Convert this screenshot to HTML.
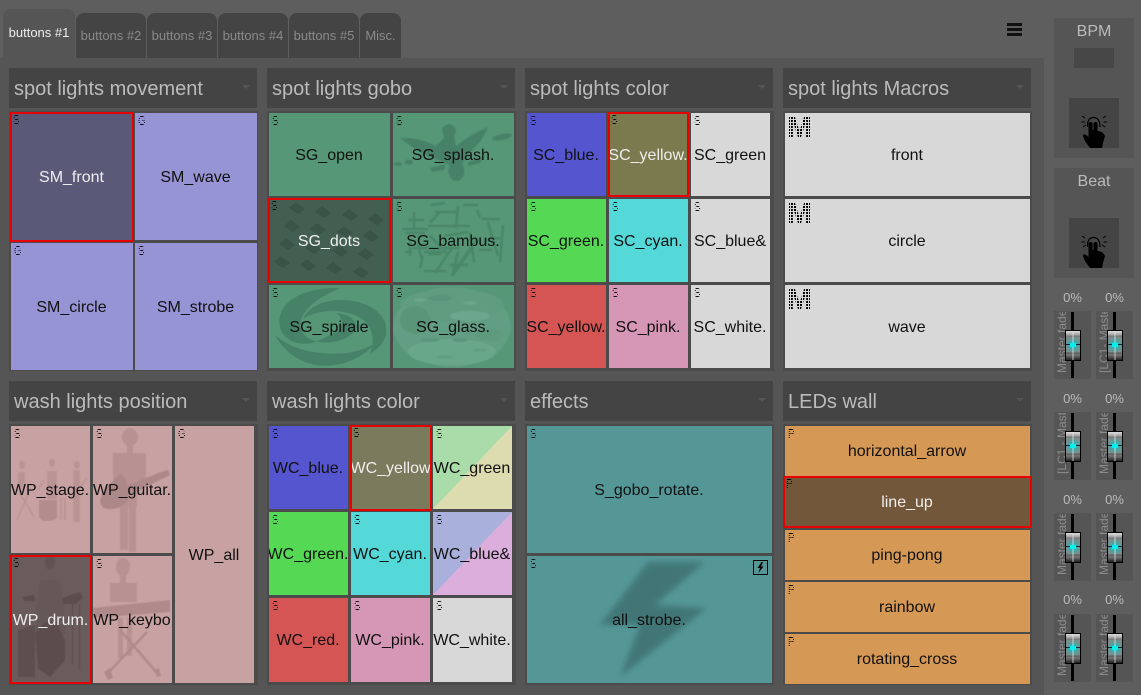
<!DOCTYPE html>
<html><head><meta charset="utf-8">
<style>
html,body{margin:0;padding:0;width:1141px;height:695px;overflow:hidden;background:#5e5e5e;font-family:"Liberation Sans",sans-serif}
div,span{box-sizing:border-box}
.a{position:absolute}
.tab{position:absolute;top:13px;height:45px;background:#444;border-radius:8px 8px 0 0;color:#8a8a8a;font-size:13px;line-height:45px;text-align:center;white-space:nowrap}
.hd{position:absolute;height:40px;background:#444;color:#bbb;font-size:20px;line-height:42px;padding-left:5px;white-space:nowrap}
.hd i{position:absolute;right:7px;top:17px;border:4px solid transparent;border-top:4px solid #555;border-bottom:0}
.gr{position:absolute;background:#4b4b4b}
.b{position:absolute;overflow:hidden;display:flex;align-items:center;justify-content:center;font-size:16px;color:#111;white-space:nowrap}
.b span{position:relative;z-index:3;top:1px;left:-.5px}
.b.s{border:2px solid #e80000;color:#eee}
.b em{position:absolute;left:3px;top:1px;z-index:3;font:normal 13px/13px "Liberation Sans",sans-serif;transform:scaleX(.75);transform-origin:0 0;color:transparent;background:linear-gradient(#000 50%,transparent 50%) 0 0/1px 2px;-webkit-background-clip:text;background-clip:text}
.b.s em{left:1px;top:-1px}
.b b.m{position:absolute;left:2px;top:0;z-index:3;font:bold 30px/30px "Liberation Sans",sans-serif;color:transparent;background:conic-gradient(from 90deg at 1px 1px,#000 25%,transparent 0) 0 0/3px 3px;-webkit-background-clip:text;background-clip:text}
.pc{position:absolute;width:37px;text-align:center;font-size:13px;line-height:14px;color:#bbb}
.f{position:absolute;width:37px;height:68px;background:#555;overflow:hidden}
.f .t{position:absolute;left:0;top:1px;width:16px;height:66px;padding-top:5px;overflow:hidden;color:#8c8c8c;font-size:12px;line-height:16px;writing-mode:vertical-rl;transform:rotate(180deg);white-space:nowrap;text-align:left}
.f .k{position:absolute;left:17px;top:1px;width:3px;height:66px;background:#000}
.f .h{position:absolute;left:11px;top:19px;width:16px;height:31px;border:1px solid #000;background:linear-gradient(#ddd 0,#aaa 12%,#777 18%,#7b8d8b 22%,#7b8d8b 72%,#5a5a5a 76%,#777 82%,#222 100%)}
.f .h i{position:absolute;display:block}
.f .h .u{left:0;top:3px;width:14px;height:22px;background:radial-gradient(circle at 50% 50%,#00e0e0 0,rgba(0,200,200,.5) 28%,rgba(0,180,180,0) 60%)}
.f .h .v{left:6px;top:0;width:2px;height:29px;background:rgba(220,230,230,.4)}
.f .h .l{left:0;top:13px;width:14px;height:1px;background:#123}
.f .h .c{left:4px;top:12px;width:6px;height:4px;background:#00f0f0}
</style></head>
<body>
<div class="a" style="left:0;top:58px;width:1044px;height:637px;background:#555"></div>

<div class="a" style="left:3px;top:9px;width:72px;height:50px;background:#555;border-radius:8px 8px 0 0;color:#eee;font-size:13px;line-height:47px;text-align:center;white-space:nowrap">buttons #1</div>
<div class="tab" style="left:76px;width:70px">buttons #2</div>
<div class="tab" style="left:147px;width:70px">buttons #3</div>
<div class="tab" style="left:218px;width:70px">buttons #4</div>
<div class="tab" style="left:289px;width:70px">buttons #5</div>
<div class="tab" style="left:360px;width:41px">Misc.</div>
<div class="a" style="left:1007px;top:23px;width:15px;height:3px;background:#111"></div>
<div class="a" style="left:1007px;top:28px;width:15px;height:3px;background:#111"></div>
<div class="a" style="left:1007px;top:33px;width:15px;height:3px;background:#111"></div>

<div class="hd" style="left:9px;top:68px;width:248px">spot lights movement<i></i></div>
<div class="hd" style="left:267px;top:68px;width:248px">spot lights gobo<i></i></div>
<div class="hd" style="left:525px;top:68px;width:248px">spot lights color<i></i></div>
<div class="hd" style="left:783px;top:68px;width:248px">spot lights Macros<i></i></div>
<div class="hd" style="left:9px;top:381px;width:248px">wash lights position<i></i></div>
<div class="hd" style="left:267px;top:381px;width:248px">wash lights color<i></i></div>
<div class="hd" style="left:525px;top:381px;width:248px">effects<i></i></div>
<div class="hd" style="left:783px;top:381px;width:248px">LEDs wall<i></i></div>

<div class="gr" style="left:9px;top:111px;width:249px;height:260px"></div>
<div class="gr" style="left:267px;top:111px;width:249px;height:260px"></div>
<div class="gr" style="left:525px;top:111px;width:249px;height:260px"></div>
<div class="gr" style="left:783px;top:111px;width:249px;height:260px"></div>
<div class="gr" style="left:9px;top:424px;width:249px;height:261px"></div>
<div class="gr" style="left:267px;top:424px;width:249px;height:261px"></div>
<div class="gr" style="left:525px;top:424px;width:249px;height:261px"></div>
<div class="gr" style="left:783px;top:424px;width:249px;height:261px"></div>

<!-- spot movement -->
<div class="b s" style="left:10px;top:112px;width:124px;height:130px;background:#5a5a78"><em>S</em><span>SM_front</span></div>
<div class="b" style="left:135px;top:113px;width:122px;height:127px;background:#9694d4"><em>G</em><span>SM_wave</span></div>
<div class="b" style="left:11px;top:243px;width:122px;height:127px;background:#9694d4"><em>G</em><span>SM_circle</span></div>
<div class="b" style="left:135px;top:243px;width:122px;height:127px;background:#9694d4"><em>S</em><span>SM_strobe</span></div>
<!-- gobo -->
<div class="b" style="left:269px;top:113px;width:121px;height:83px;background:#559777"><em>S</em><span>SG_open</span></div>
<div class="b" style="left:393px;top:113px;width:121px;height:83px;background:#559777"><em>S</em><span>SG_splash.</span></div>
<div class="b s" style="left:268px;top:198px;width:123px;height:85px;background:#435f52"><em>S</em><span>SG_dots</span></div>
<div class="b" style="left:393px;top:199px;width:121px;height:83px;background:#559777"><em>S</em><span>SG_bambus.</span></div>
<div class="b" style="left:269px;top:285px;width:121px;height:83px;background:#559777"><em>S</em><span>SG_spirale</span></div>
<div class="b" style="left:393px;top:285px;width:121px;height:83px;background:#559777"><em>S</em><span>SG_glass.</span></div>
<!-- spot color -->
<div class="b" style="left:527px;top:113px;width:79px;height:83px;background:#5555d0"><em>S</em><span>SC_blue.</span></div>
<div class="b s" style="left:608px;top:112px;width:81px;height:85px;background:#7a7a4e"><em>S</em><span>SC_yellow.</span></div>
<div class="b" style="left:691px;top:113px;width:79px;height:83px;background:#d8d8d8"><em>S</em><span>SC_green</span></div>
<div class="b" style="left:527px;top:199px;width:79px;height:83px;background:#55d955"><em>S</em><span>SC_green.</span></div>
<div class="b" style="left:609px;top:199px;width:79px;height:83px;background:#55d8d8"><em>S</em><span>SC_cyan.</span></div>
<div class="b" style="left:691px;top:199px;width:79px;height:83px;background:#d8d8d8"><em>S</em><span>SC_blue&amp;</span></div>
<div class="b" style="left:527px;top:285px;width:79px;height:83px;background:#d55555"><em>S</em><span>SC_yellow.</span></div>
<div class="b" style="left:609px;top:285px;width:79px;height:83px;background:#d697b6"><em>S</em><span>SC_pink.</span></div>
<div class="b" style="left:691px;top:285px;width:79px;height:83px;background:#d8d8d8"><em>S</em><span>SC_white.</span></div>
<!-- macros -->
<div class="b" style="left:785px;top:113px;width:245px;height:83px;background:#d8d8d8"><b class="m">M</b><span>front</span></div>
<div class="b" style="left:785px;top:199px;width:245px;height:83px;background:#d8d8d8"><b class="m">M</b><span>circle</span></div>
<div class="b" style="left:785px;top:285px;width:245px;height:83px;background:#d8d8d8"><b class="m">M</b><span>wave</span></div>
<!-- wash position -->
<div class="b" style="left:11px;top:426px;width:79px;height:127px;background:#c8a2a2"><em>S</em><span>WP_stage.</span></div>
<div class="b" style="left:93px;top:426px;width:79px;height:127px;background:#c8a2a2"><em>S</em><span>WP_guitar.</span></div>
<div class="b" style="left:175px;top:426px;width:79px;height:257px;background:#c8a2a2"><em>G</em><span>WP_all</span></div>
<div class="b s" style="left:10px;top:555px;width:82px;height:129px;background:#6b5c5c"><em>S</em><span>WP_drum.</span></div>
<div class="b" style="left:93px;top:556px;width:79px;height:127px;background:#c8a2a2"><em>S</em><span>WP_keybo</span></div>
<!-- wash color -->
<div class="b" style="left:269px;top:426px;width:79px;height:83px;background:#5555d0"><em>S</em><span>WC_blue.</span></div>
<div class="b s" style="left:350px;top:425px;width:82px;height:86px;background:#7a7a5c"><em>S</em><span>WC_yellow</span></div>
<div class="b" style="left:433px;top:426px;width:79px;height:83px;background:linear-gradient(to bottom right,#a9dca9 50%,#dcdcb0 50%)"><em>S</em><span>WC_green</span></div>
<div class="b" style="left:269px;top:512px;width:79px;height:83px;background:#55d955"><em>S</em><span>WC_green.</span></div>
<div class="b" style="left:351px;top:512px;width:79px;height:83px;background:#55d8d8"><em>S</em><span>WC_cyan.</span></div>
<div class="b" style="left:433px;top:512px;width:79px;height:83px;background:linear-gradient(to bottom right,#a9b0dc 50%,#dcaedc 50%)"><em>S</em><span>WC_blue&amp;</span></div>
<div class="b" style="left:269px;top:598px;width:79px;height:84px;background:#d55555"><em>S</em><span>WC_red.</span></div>
<div class="b" style="left:351px;top:598px;width:79px;height:84px;background:#d697b6"><em>S</em><span>WC_pink.</span></div>
<div class="b" style="left:433px;top:598px;width:79px;height:84px;background:#d8d8d8"><em>S</em><span>WC_white.</span></div>
<!-- effects -->
<div class="b" style="left:527px;top:426px;width:245px;height:127px;background:#559797"><em>S</em><span>S_gobo_rotate.</span></div>
<div class="b" style="left:527px;top:556px;width:245px;height:127px;background:#559797"><em>S</em><span>all_strobe.</span></div>
<!-- LEDs -->
<div class="b" style="left:785px;top:426px;width:245px;height:50px;background:#d69855"><em>P</em><span>horizontal_arrow</span></div>
<div class="b s" style="left:783px;top:476px;width:249px;height:52px;background:#73573a"><em>P</em><span>line_up</span></div>
<div class="b" style="left:785px;top:530px;width:245px;height:50px;background:#d69855"><em>P</em><span>ping-pong</span></div>
<div class="b" style="left:785px;top:582px;width:245px;height:50px;background:#d69855"><em>P</em><span>rainbow</span></div>
<div class="b" style="left:785px;top:634px;width:245px;height:50px;background:#d69855"><em>P</em><span>rotating_cross</span></div>

<!-- artwork layer -->
<svg class="a" style="left:0;top:0;z-index:2;pointer-events:none" width="1141" height="695" viewBox="0 0 1141 695">
<defs>
<filter id="bl" x="-20%" y="-20%" width="140%" height="140%"><feGaussianBlur stdDeviation="3"/></filter>
<filter id="b1" x="-10%" y="-10%" width="120%" height="120%"><feGaussianBlur stdDeviation=".6"/></filter>
<clipPath id="cg"><rect x="393" y="285" width="121" height="83"/></clipPath>
<clipPath id="cs"><rect x="269" y="285" width="121" height="83"/></clipPath>
<clipPath id="cw1"><rect x="11" y="426" width="79" height="127"/></clipPath>
<clipPath id="cw2"><rect x="93" y="426" width="79" height="127"/></clipPath>
<clipPath id="cw3"><rect x="12" y="557" width="78" height="125"/></clipPath>
<clipPath id="cw4"><rect x="93" y="556" width="79" height="127"/></clipPath>
</defs>
<!-- splash -->
<g fill="#468267" filter="url(#b1)">
<path d="M400 138 Q418 137 436 146 Q442 140 444 138 L442 130 A7 7 0 1 1 454 136 L456 146 Q470 135 488 127 Q482 142 470 152 Q464 160 462 164 A8 10 0 1 1 450 165 Q438 160 428 156 Q412 148 400 138Z"/>
<ellipse cx="502" cy="137" rx="10" ry="3" transform="rotate(-12 502 137)"/>
<ellipse cx="409" cy="162" rx="4" ry="2.500"/><ellipse cx="398" cy="164" rx="4" ry="2"/>
<path d="M430 168 L446 164 L444 170 L432 172Z"/><path d="M468 162 L484 157 L480 163 L468 166Z"/>
</g>
<!-- dots -->
<g fill="#3a5447">
<path d="M289 208l7-6l9 7l-7 5z"/><path d="M315 212l7-6l9 7l-7 5z"/><path d="M342 215l7-6l9 7l-7 5z"/><path d="M368 219l7-6l9 7l-7 5z"/>
<path d="M284 226l7-6l9 7l-7 5z"/><path d="M310 229l7-6l9 7l-7 5z"/><path d="M337 232l7-6l9 7l-7 5z"/><path d="M363 236l7-6l9 7l-7 5z"/>
<path d="M279 244l7-6l9 7l-7 5z"/><path d="M305 248l7-6l9 7l-7 5z"/><path d="M332 251l7-6l9 7l-7 5z"/><path d="M358 254l7-6l9 7l-7 5z"/>
<path d="M274 262l7-6l9 7l-7 5z"/><path d="M300 265l7-6l9 7l-7 5z"/><path d="M326 268l7-6l9 7l-7 5z"/><path d="M353 272l7-6l9 7l-7 5z"/>
</g>
<!-- bambus -->
<g stroke="#4a8769" stroke-width="2.500" fill="none" filter="url(#b1)">
<path d="M414 212V228M408 220H424M402 229H428M431 205L445 203M435 212H457M430 223L440 212"/>
<path d="M458 206L456 228M463 205H478M477 210L480 218M482 219H500M488 222L498 256M503 225L500 262"/>
<path d="M405 233H425M410 242V256M412 248H460M428 226H470M418 244L422 260M424 252H447M423 256L420 268M428 254H441"/>
<path d="M452 248L435 273M472 248L452 276M450 265H468M458 252L453 273M476 240L452 275M479 250H492M405 252H412"/>
<path d="M424 271H446M445 236L468 232M485 240L500 238M470 232L474 262M430 236L440 246" />
</g>
<!-- spiral -->
<g clip-path="url(#cs)"><g fill="#468267" transform="translate(260 105) scale(.33333)">
<path d="M240 550 C150 545 60 580 58 650 C58 700 110 730 170 710 C130 700 115 670 125 640 C140 600 190 570 240 550Z"/>
<path d="M130 640 C150 595 220 575 290 590 C350 605 385 640 378 690 C372 715 350 735 330 745 C345 710 340 670 310 645 C265 610 180 610 130 640Z"/>
<path d="M45 690 C70 740 130 785 200 782 C270 780 320 745 345 715 C320 730 280 745 240 745 C160 750 90 730 45 690Z"/>
<path d="M170 710 C220 720 280 700 290 665 C285 640 260 625 230 625 C255 645 250 670 220 685Z"/>
</g></g>
<!-- glass -->
<g clip-path="url(#cg)" filter="url(#b1)">
<ellipse cx="452" cy="327" rx="59" ry="40" fill="#629e84"/>
<ellipse cx="452" cy="305" rx="52" ry="16" fill="#5e9c80"/>
<ellipse cx="415" cy="320" rx="15" ry="14" fill="#5a9578"/>
<ellipse cx="452" cy="352" rx="44" ry="13" fill="#69a78b"/>
<ellipse cx="470" cy="316" rx="20" ry="5" fill="#6ca78d"/>
<ellipse cx="440" cy="298" rx="12" ry="3" fill="#58947a"/>
<ellipse cx="490" cy="335" rx="14" ry="6" fill="#5d9a7e"/>
<ellipse cx="430" cy="340" rx="10" ry="2" fill="#5a967b"/>
<ellipse cx="460" cy="340" rx="8" ry="2" fill="#5a967b"/>
<ellipse cx="470" cy="303" rx="7" ry="2" fill="#6aa68c"/>
<ellipse cx="420" cy="300" rx="6" ry="2" fill="#6aa68c"/>
<ellipse cx="445" cy="357" rx="9" ry="1.500" fill="#5f9d81"/>
<ellipse cx="480" cy="350" rx="7" ry="1.500" fill="#5f9d81"/>
</g>
<!-- WP stage -->
<g fill="#ba9494" stroke="none" clip-path="url(#cw1)" filter="url(#b1)">
<ellipse cx="22" cy="465" rx="3" ry="4"/><rect x="18" y="472" width="7" height="15"/>
<ellipse cx="52" cy="463" rx="3" ry="4"/><rect x="47" y="471" width="10" height="28"/>
<ellipse cx="77" cy="465" rx="3" ry="4"/><rect x="73" y="470" width="7" height="52"/>
<path d="M39 500 h18 v18 l-6 3 h-8 l-4 -4z" fill="#b38d8d"/>
<path d="M78 490L87 478M38 490L44 480M18 490L34 517M30 490L17 520" stroke="#ba9494" stroke-width="1.500" fill="none"/>
<rect x="60" y="498" width="2" height="22"/><rect x="64" y="498" width="2" height="22"/>
</g>
<!-- WP guitar -->
<g fill="#b89292" clip-path="url(#cw2)" filter="url(#b1)">
<ellipse cx="130" cy="437" rx="8" ry="9"/><rect x="127" y="445" width="6" height="9"/>
<rect x="113" y="453" width="33" height="29"/><rect x="122" y="482" width="15" height="25"/>
<rect x="120" y="505" width="8" height="45"/><rect x="129" y="505" width="7" height="47"/>
<path d="M100 500 Q104 488 112 482 L120 474 Q126 476 127 486 L158 473 L168 470 L170 475 L130 495 Q126 508 112 509 Q100 510 100 500Z" fill="#ad8888"/>
</g>
<!-- WP drum -->
<g fill="#5c4e4e" clip-path="url(#cw3)" filter="url(#b1)">
<ellipse cx="50" cy="562" rx="5" ry="8" opacity=".7"/>
<path d="M40 580h20l4 30l2 25h-30l0-25z" opacity=".3"/>
<path d="M22 597l12 -2l1 6h-10z"/><path d="M62 598l18 -6l3 6l-8 6h-12z"/>
<path d="M35 633L45 622L56 622L65 640L65 660L50 677L38 668Z"/>
<path d="M18 630L35 625V677H18Z" opacity=".85"/>
<rect x="72" y="604" width="1" height="60"/><rect x="79" y="604" width="1" height="66"/>
</g>
<!-- WP keyboard -->
<g fill="#b89292" clip-path="url(#cw4)" filter="url(#b1)">
<ellipse cx="123" cy="567" rx="7" ry="9"/><rect x="120" y="575" width="6" height="8"/>
<rect x="110" y="583" width="27" height="19"/>
<path d="M93 608L170 600V612L93 618Z" fill="#b08a8a"/>
<rect x="118" y="618" width="5" height="40"/><rect x="127" y="618" width="5" height="38"/>
<path d="M108 673L147 632M120 630L157 673" stroke="#b08a8a" stroke-width="2.500" fill="none"/>
<path d="M104 672l6 -4l3 10l-5 2z" fill="#b08a8a"/><path d="M155 670l4 -2l2 8l-4 1z" fill="#b08a8a"/>
</g>
<!-- lightning -->
<path d="M648 562L705 562L655 605L707 608L620 677L640 625L600 625Z" fill="#417373" filter="url(#bl)" opacity=".9"/>
<rect x="753.500" y="560.500" width="14" height="14" fill="none" stroke="#000"/>
<path d="M761.500 562L757.500 568H760L758.500 573L763.500 566.500H761L763 562Z" fill="#000"/>
<!-- hand icons -->
<g fill="#000">
<path d="M1088.500 124a2 2 0 0 1 4 0V130h1V124a2 2 0 0 1 4 0V131C1101 131 1104 133 1105 136L1103 143L1102 148H1090L1085 141L1083 136C1083 133 1086 134 1088.500 137Z"/>
<path d="M1087.500 127C1087 120 1090 117.500 1093.500 117.500C1097 117.500 1100 120 1100 127" fill="none" stroke="#000" stroke-width="1.200"/>
<path d="M1082 116l3 2M1081.500 122h3.500M1083 127l3-2M1106 116l-3 2M1107 122h-3.500M1105 127l-3-2" fill="none" stroke="#000" stroke-width="1"/>
</g>
<g fill="#000">
<path d="M1088.500 244a2 2 0 0 1 4 0V250h1V244a2 2 0 0 1 4 0V251C1101 251 1104 253 1105 256L1103 263L1102 268H1090L1085 261L1083 256C1083 253 1086 254 1088.500 257Z"/>
<path d="M1087.500 247C1087 240 1090 237.500 1093.500 237.500C1097 237.500 1100 240 1100 247" fill="none" stroke="#000" stroke-width="1.200"/>
<path d="M1082 236l3 2M1081.500 242h3.500M1083 247l3-2M1106 236l-3 2M1107 242h-3.500M1105 247l-3-2" fill="none" stroke="#000" stroke-width="1"/>
</g>
</svg>

<!-- sidebar -->
<div class="a" style="left:1054px;top:18px;width:80px;height:140px;background:#555;color:#bbb;font-size:16px;text-align:center;line-height:28px">BPM</div>
<div class="a" style="left:1074px;top:48px;width:40px;height:20px;background:#474747"></div>
<div class="a" style="left:1069px;top:98px;width:50px;height:50px;background:#444"></div>
<div class="a" style="left:1054px;top:168px;width:80px;height:110px;background:#555;color:#bbb;font-size:16px;text-align:center;line-height:28px">Beat</div>
<div class="a" style="left:1069px;top:218px;width:50px;height:50px;background:#444"></div>

<div class="pc" style="left:1054px;top:291px">0%</div><div class="pc" style="left:1096px;top:291px">0%</div>
<div class="f" style="left:1054px;top:311px"><div class="t">Master fader</div><div class="k"></div><div class="h"><i class="u"></i><i class="v"></i><i class="l"></i><i class="c"></i></div></div>
<div class="f" style="left:1096px;top:311px"><div class="t">[LC1- Master</div><div class="k"></div><div class="h"><i class="u"></i><i class="v"></i><i class="l"></i><i class="c"></i></div></div>

<div class="pc" style="left:1054px;top:392px">0%</div><div class="pc" style="left:1096px;top:392px">0%</div>
<div class="f" style="left:1054px;top:412px"><div class="t">[LC1 - Master</div><div class="k"></div><div class="h"><i class="u"></i><i class="v"></i><i class="l"></i><i class="c"></i></div></div>
<div class="f" style="left:1096px;top:412px"><div class="t">Master fader</div><div class="k"></div><div class="h"><i class="u"></i><i class="v"></i><i class="l"></i><i class="c"></i></div></div>

<div class="pc" style="left:1054px;top:493px">0%</div><div class="pc" style="left:1096px;top:493px">0%</div>
<div class="f" style="left:1054px;top:513px"><div class="t">Master fader</div><div class="k"></div><div class="h"><i class="u"></i><i class="v"></i><i class="l"></i><i class="c"></i></div></div>
<div class="f" style="left:1096px;top:513px"><div class="t">Master fader</div><div class="k"></div><div class="h"><i class="u"></i><i class="v"></i><i class="l"></i><i class="c"></i></div></div>

<div class="pc" style="left:1054px;top:593px">0%</div><div class="pc" style="left:1096px;top:593px">0%</div>
<div class="f" style="left:1054px;top:614px"><div class="t">Master fader</div><div class="k"></div><div class="h"><i class="u"></i><i class="v"></i><i class="l"></i><i class="c"></i></div></div>
<div class="f" style="left:1096px;top:614px"><div class="t">Master fader</div><div class="k"></div><div class="h"><i class="u"></i><i class="v"></i><i class="l"></i><i class="c"></i></div></div>
</body></html>
